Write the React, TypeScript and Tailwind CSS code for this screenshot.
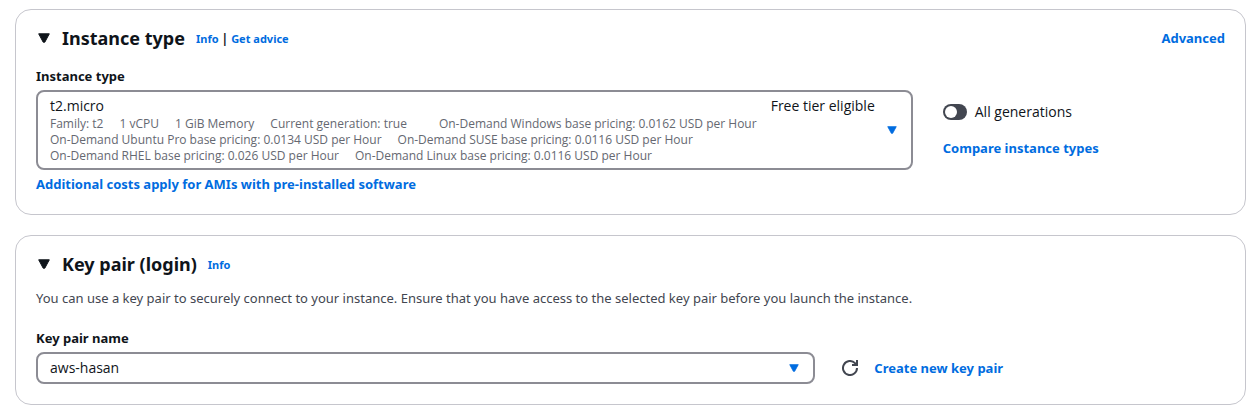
import type { ReactNode } from "react";

const specRows = [
  [
    "Family: t2",
    "1 vCPU",
    "1 GiB Memory",
    "Current generation: true",
    "",
    "On-Demand Windows base pricing: 0.0162 USD per Hour",
  ],
  [
    "On-Demand Ubuntu Pro base pricing: 0.0134 USD per Hour",
    "On-Demand SUSE base pricing: 0.0116 USD per Hour",
  ],
  [
    "On-Demand RHEL base pricing: 0.026 USD per Hour",
    "On-Demand Linux base pricing: 0.0116 USD per Hour",
  ],
];

function Caret({ className }: { className: string }) {
  return (
    <svg viewBox="0 0 12 10" className={className} fill="currentColor" stroke="currentColor" strokeLinejoin="round" aria-hidden="true">
      <path d="M.7.8h10.6L6.8 9.2H5.2z" />
    </svg>
  );
}

function TextLink({ children, small }: { children: ReactNode; small?: boolean }) {
  return (
    <a
      href="#"
      className={
        small
          ? "font-['Noto_Sans',sans-serif] text-[11px] font-bold text-[#006ce0]"
          : "font-['Noto_Sans',sans-serif] text-[13px] font-bold text-[#006ce0]"
      }
    >
      {children}
    </a>
  );
}

function FieldLabel({ htmlFor, children }: { htmlFor: string; children: ReactNode }) {
  return (
    <label htmlFor={htmlFor} className="block font-['Noto_Sans',sans-serif] text-[13px] leading-5 font-bold">
      {children}
    </label>
  );
}

function Panel({ title, links, action, children }: { title: string; links: ReactNode; action?: ReactNode; children: ReactNode }) {
  return (
    <section className="rounded-2xl border border-[#c6c6cd] bg-white px-5 pt-4 pb-5">
      <header className="flex items-center justify-between">
        <div className="flex items-baseline">
          <button type="button" className="flex items-center gap-3 font-['Noto_Sans',sans-serif] text-lg leading-6 font-bold">
            <Caret className="ml-[2px] h-[10px] w-3" />
            <h2>{title}</h2>
          </button>
          <div className="ml-[11px] flex items-baseline gap-[3px]">{links}</div>
        </div>
        {action}
      </header>
      {children}
    </section>
  );
}

export default function App() {
  return (
    <main className="flex flex-col gap-5 bg-white py-[9px] pr-3 pl-[15px] font-['Open_Sans',sans-serif] text-sm leading-5 text-[#0f141a]">
      <Panel
        title="Instance type"
        links={
          <>
            <TextLink small>Info</TextLink>
            <span className="text-xs font-bold">|</span>
            <TextLink small>Get advice</TextLink>
          </>
        }
        action={<TextLink>Advanced</TextLink>}
      >
        <div className="mt-4 grid grid-cols-[3fr_1fr] gap-5">
          <div>
            <FieldLabel htmlFor="instance-type">Instance type</FieldLabel>
            <div className="relative mt-1 rounded-lg border-2 border-[#8c8c94] py-1 pr-3.5 pl-3">
              <div className="flex items-center">
                <div className="flex-1">
                  <div className="flex justify-between">
                    <span>t2.micro</span>
                    <span>Free tier eligible</span>
                  </div>
                  {specRows.map((row) => (
                    <div key={row[0]} className="flex gap-4 text-xs leading-4 text-[#656871]">
                      {row.map((spec) => (
                        <span key={spec}>{spec}</span>
                      ))}
                    </div>
                  ))}
                </div>
                <Caret className="ml-3 h-2 w-[10px] text-[#006ce0]" />
              </div>
              <select id="instance-type" className="absolute inset-0 h-full w-full cursor-pointer opacity-0">
                <option>t2.micro</option>
              </select>
            </div>
            <div className="mt-1">
              <TextLink>Additional costs apply for AMIs with pre-installed software</TextLink>
            </div>
          </div>
          <div className="flex flex-col gap-4 pt-9 pl-[10px]">
            <label className="flex items-center gap-2">
              <input
                type="checkbox"
                role="switch"
                className="h-4 w-6 appearance-none rounded-full bg-[#424650] p-[2px] before:block before:size-3 before:rounded-full before:bg-white checked:bg-[#006ce0] checked:before:ml-2"
              />
              All generations
            </label>
            <TextLink>Compare instance types</TextLink>
          </div>
        </div>
      </Panel>

      <Panel title="Key pair (login)" links={<TextLink small>Info</TextLink>}>
        <p className="mt-3 mb-5 font-['Noto_Sans',sans-serif] text-[13px] leading-5 text-[#424650]">
          You can use a key pair to securely connect to your instance. Ensure that you have access to the selected key pair before you launch the instance.
        </p>
        <FieldLabel htmlFor="key-pair">Key pair name</FieldLabel>
        <div className="mt-1 grid grid-cols-[2fr_1fr] items-center gap-5">
          <div className="relative">
            <select id="key-pair" className="block h-8 w-full appearance-none rounded-lg border-2 border-[#8c8c94] px-3">
              <option>aws-hasan</option>
            </select>
            <Caret className="pointer-events-none absolute top-3 right-4 h-2 w-[10px] text-[#006ce0]" />
          </div>
          <div className="flex items-center gap-4 pl-[7px]">
            <button type="button" aria-label="Refresh key pairs" className="text-[#424650]">
              <svg viewBox="0 0 16 16" className="size-4" fill="none" stroke="currentColor" strokeWidth="2" aria-hidden="true">
                <path d="M15 8a7 7 0 1 1-2-4.9L14.5 5" />
                <path d="M10 5h5V0" />
              </svg>
            </button>
            <TextLink>Create new key pair</TextLink>
          </div>
        </div>
      </Panel>
    </main>
  );
}
